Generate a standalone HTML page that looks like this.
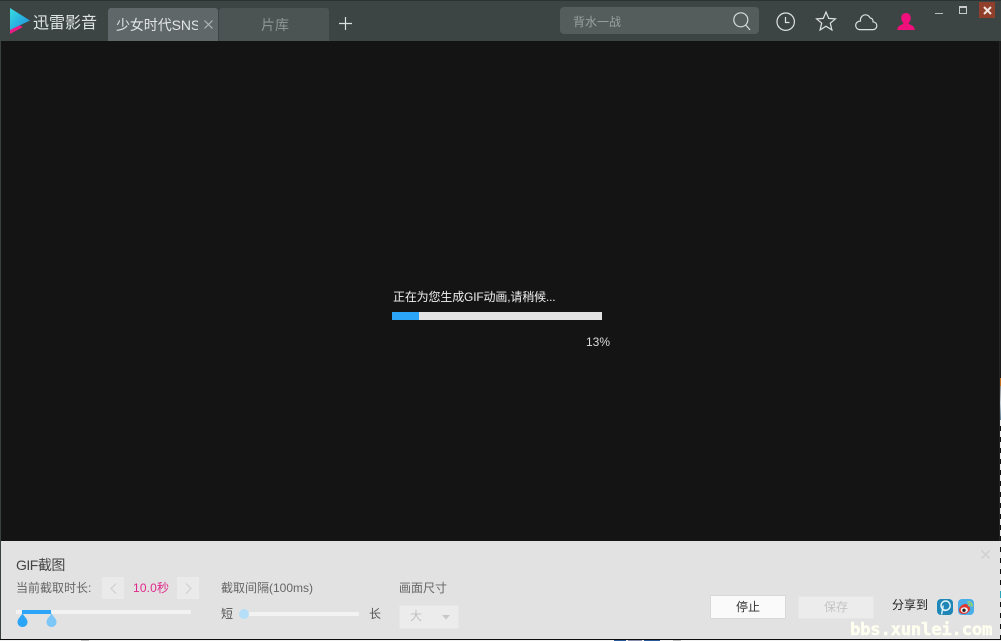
<!DOCTYPE html>
<html lang="zh">
<head>
<meta charset="utf-8">
<style>
html,body{margin:0;padding:0;width:1001px;height:641px;overflow:hidden;background:#000;}
body{position:relative;font-family:"Liberation Sans","Noto Sans CJK SC",sans-serif;}
.a{position:absolute;white-space:nowrap;}
svg{position:absolute;overflow:visible;}
</style>
</head>
<body>
<!-- title bar -->
<div class="a" style="left:0;top:0;width:1001px;height:41px;background:#3d4444;border-top:1px solid #2c3232;box-sizing:border-box;"></div>
<!-- video area -->
<div class="a" style="left:1px;top:41px;width:998px;height:500px;background:#141414;"></div>
<div class="a" style="left:0;top:41px;width:1px;height:600px;background:#3a3f3f;"></div>
<div class="a" style="left:999px;top:41px;width:1px;height:600px;background:#232525;"></div>
<div class="a" style="left:1000px;top:41px;width:1px;height:337px;background:#1c1c1c;"></div>
<div class="a" style="left:1000px;top:378px;width:1px;height:8px;background:#c4701f;"></div>
<div class="a" style="left:1000px;top:386px;width:1px;height:34px;background:linear-gradient(#8a8a8a,#c9d2d8,#5a7a90);"></div>
<div class="a" style="left:1000px;top:420px;width:1px;height:221px;background:repeating-linear-gradient(#e8e8e8 0,#e8e8e8 6px,#111 6px,#111 11px);"></div>
<div class="a" style="left:1000px;top:591px;width:1px;height:7px;background:#2aa6b8;"></div>

<!-- logo -->
<svg style="left:0;top:0" width="40" height="40">
<defs>
<linearGradient id="lg" x1="0" y1="0" x2="1" y2="1"><stop offset="0" stop-color="#38dde0"/><stop offset="1" stop-color="#1d8ce0"/></linearGradient>
</defs>
<polygon points="10,21 10,34 23,27" fill="#ec1c85"/>
<polygon points="10,8 30,20.5 10,30" fill="url(#lg)"/>
</svg>
<div class="a" style="left:33px;top:12.5px;font-size:16px;line-height:22px;color:#dfe3e3;">迅雷影音</div>

<!-- tabs -->
<div class="a" style="left:108px;top:8px;width:110px;height:33px;background:#606768;border-radius:3px 3px 0 0;"></div>
<div class="a" style="left:116px;top:15px;width:82px;overflow:hidden;font-size:14px;line-height:20px;color:#e2e5e5;letter-spacing:-0.1px;">少女时代SNSD</div>
<svg style="left:204px;top:20px" width="9" height="9"><path d="M0.5 0.5L8.5 8.5M8.5 0.5L0.5 8.5" stroke="#b5b9b9" stroke-width="1.1" fill="none"/></svg>
<div class="a" style="left:219px;top:8px;width:110px;height:33px;background:#4b5353;border-radius:3px 3px 0 0;"></div>
<div class="a" style="left:261px;top:15px;font-size:14px;line-height:20px;color:#8e9494;">片库</div>
<svg style="left:339px;top:17px" width="13" height="13"><path d="M6.5 0V13M0 6.5H13" stroke="#dde0e0" stroke-width="1.2" fill="none"/></svg>

<!-- search -->
<div class="a" style="left:560px;top:7px;width:199px;height:27px;background:#545c5c;border-radius:4px;"></div>
<div class="a" style="left:573px;top:13px;font-size:12px;line-height:18px;color:#9aa0a0;">背水一战</div>
<svg style="left:733px;top:11.5px" width="18" height="19" fill="none" stroke="#d8dbdb" stroke-width="1.2"><circle cx="7.8" cy="7.8" r="7"/><path d="M12.8 13L17 18"/></svg>

<!-- toolbar icons -->
<svg style="left:776px;top:11.5px" width="20" height="20" fill="none" stroke="#dfe2e2" stroke-width="1.2"><circle cx="9.7" cy="9.7" r="8.7"/><path d="M9.5 5V10.5H13.5"/></svg>
<svg style="left:815px;top:11px" width="22" height="20" fill="none" stroke="#dfe2e2" stroke-width="1.2"><path d="M11 1L13.7 7.4L20.4 7.9L15.3 12.2L16.9 18.9L11 15.2L5.1 18.9L6.7 12.2L1.6 7.9L8.3 7.4Z"/></svg>
<svg style="left:855px;top:14px" width="23" height="17" fill="none" stroke="#dfe2e2" stroke-width="1.2"><path d="M4.6 15.6H18C20.4 15.6 21.8 13.8 21.8 11.8C21.8 9.6 20.2 8 18 7.8C18.3 5.8 17.2 4.3 15.2 4C14.2 2 12.4 0.8 10.4 0.8C7.8 0.8 5.8 2.8 5.4 5.6C5.3 6.2 5.4 6.6 5.5 7C3 7 0.7 8.8 0.7 11.4C0.7 13.8 2.4 15.6 4.6 15.6Z"/></svg>
<svg style="left:897px;top:13px" width="18" height="17"><path d="M9 0C12 0 13.8 2.3 13.8 5C13.8 7 12.9 8.6 11.7 9.8C11.6 10.7 12 11.1 13.2 11.6C15.4 12.4 17.6 13.4 17.8 17H0.2C0.4 13.4 2.6 12.4 4.8 11.6C6 11.1 6.4 10.7 6.3 9.8C5.1 8.6 4.2 7 4.2 5C4.2 2.3 6 0 9 0Z" fill="#f0107c"/></svg>

<!-- window controls -->
<div class="a" style="left:935px;top:13px;width:8px;height:1px;background:#b9bdbd;"></div>
<div class="a" style="left:959px;top:6px;border:1px solid #c8cbcb;border-top-width:2px;width:6px;height:5px;"></div>
<div class="a" style="left:979px;top:2px;width:16px;height:16px;background:#8f3f2a;"></div>
<svg style="left:983px;top:6px" width="9" height="9"><path d="M1 1L8 8M8 1L1 8" stroke="#efe6e2" stroke-width="2" fill="none"/></svg>

<!-- progress -->
<div class="a" style="left:393px;top:288px;font-size:12px;line-height:18px;color:#f0f0f0;letter-spacing:-0.16px;">正在为您生成GIF动画,请稍候...</div>
<div class="a" style="left:392px;top:312px;width:210px;height:8px;background:#e2e2e2;"></div>
<div class="a" style="left:392px;top:312px;width:27px;height:8px;background:#2ba5f7;"></div>
<div class="a" style="left:586px;top:334px;font-size:12px;line-height:16px;color:#dcdcdc;">13%</div>

<!-- bottom panel -->
<div class="a" style="left:1px;top:541px;width:999px;height:98px;background:#e2e2e2;"></div>
<div class="a" style="left:0;top:639px;width:1001px;height:1px;background:#0c0c0c;"></div>
<div class="a" style="left:0;top:640px;width:1001px;height:1px;background:#f2f2f2;"></div>
<div class="a" style="left:81px;top:640px;width:8px;height:1px;background:#bdbdbd;"></div>
<div class="a" style="left:614px;top:640px;width:12px;height:1px;background:#2a5a9a;"></div>
<div class="a" style="left:628px;top:640px;width:14px;height:1px;background:#8a8fb0;"></div>
<div class="a" style="left:644px;top:640px;width:16px;height:1px;background:#2a5a9a;"></div>
<div class="a" style="left:673px;top:640px;width:8px;height:1px;background:#bdbdbd;"></div>
<svg style="left:981px;top:550px" width="9" height="9"><path d="M0.5 0.5L8.5 8.5M8.5 0.5L0.5 8.5" stroke="#cfcfcf" stroke-width="1.3" fill="none"/></svg>

<div class="a" style="left:16px;top:556px;font-size:14px;line-height:19px;color:#444;letter-spacing:-0.5px;">GIF截图</div>
<div class="a" style="left:16px;top:580px;font-size:12px;line-height:17px;color:#666;">当前截取时长:</div>
<div class="a" style="left:102px;top:577px;width:22px;height:22px;background:#eaeaea;"></div>
<svg style="left:110px;top:583px" width="7" height="11"><path d="M6 0.5L1 5.5L6 10.5" stroke="#cdcdcd" stroke-width="1" fill="none"/></svg>
<div class="a" style="left:133px;top:580px;font-size:12px;line-height:17px;color:#e2278a;letter-spacing:0.15px;">10.0秒</div>
<div class="a" style="left:177px;top:577px;width:22px;height:22px;background:#eaeaea;"></div>
<svg style="left:185px;top:583px" width="7" height="11"><path d="M1 0.5L6 5.5L1 10.5" stroke="#cdcdcd" stroke-width="1" fill="none"/></svg>

<div class="a" style="left:16px;top:610px;width:175px;height:4px;background:#f2f2f2;"></div>
<div class="a" style="left:22px;top:610px;width:29px;height:4px;background:#2ba5f7;"></div>
<svg style="left:17px;top:613px" width="11" height="14"><path d="M5.5 0C6 2.5 10.5 5.4 10.5 9C10.5 11.9 8.3 14 5.5 14C2.7 14 0.5 11.9 0.5 9C0.5 5.4 5 2.5 5.5 0Z" fill="#2ba5f7"/></svg>
<svg style="left:46px;top:613px" width="11" height="14"><path d="M5.5 0C6 2.5 10.5 5.4 10.5 9C10.5 11.9 8.3 14 5.5 14C2.7 14 0.5 11.9 0.5 9C0.5 5.4 5 2.5 5.5 0Z" fill="#7cc6f8"/></svg>

<div class="a" style="left:221px;top:580px;font-size:12px;line-height:17px;color:#666;">截取间隔(100ms)</div>
<div class="a" style="left:221px;top:606px;font-size:12px;line-height:17px;color:#555;">短</div>
<div class="a" style="left:240px;top:612px;width:119px;height:4px;background:#f2f2f2;"></div>
<div class="a" style="left:239px;top:609px;width:10px;height:10px;border-radius:50%;background:#b5dff9;"></div>
<div class="a" style="left:369px;top:606px;font-size:12px;line-height:17px;color:#555;">长</div>

<div class="a" style="left:399px;top:580px;font-size:12px;line-height:17px;color:#666;">画面尺寸</div>
<div class="a" style="left:399px;top:605px;width:60px;height:24px;background:#ececec;border:1px solid #e6e6e6;box-sizing:border-box;"></div>
<div class="a" style="left:410px;top:608px;font-size:12px;line-height:17px;color:#c0c0c0;">大</div>
<svg style="left:442px;top:615px" width="8" height="5"><polygon points="0,0 8,0 4,4.5" fill="#c8c8c8"/></svg>

<div class="a" style="left:710px;top:595px;width:76px;height:24px;background:#fafafa;border:1px solid #d8d8d8;box-sizing:border-box;text-align:center;font-size:12px;line-height:22px;color:#333;">停止</div>
<div class="a" style="left:798px;top:596px;width:76px;height:23px;background:#ececec;border:1px solid #e6e6e6;box-sizing:border-box;text-align:center;font-size:12px;line-height:21px;color:#c4c4c4;">保存</div>
<div class="a" style="left:892px;top:597px;font-size:12px;line-height:17px;color:#222;">分享到</div>

<!-- share icons -->
<div class="a" style="left:937px;top:599px;width:16px;height:16px;border-radius:4px;background:#1f87b8;"></div>
<svg style="left:937px;top:599px" width="16" height="16" fill="none" stroke="#e6f6fb" stroke-width="1.4"><path d="M4.6 15.5L6.2 6.5"/><circle cx="8.6" cy="6.6" r="4.6"/><path d="M6.5 11.5C9 12 12 11 13 8.5" stroke-width="1"/></svg>
<div class="a" style="left:958px;top:599px;width:16px;height:16px;border-radius:4px;background:#4aaee8;"></div>
<svg style="left:958px;top:599px" width="16" height="16"><path d="M1 11C1 8 4.5 5 7.5 5C9.5 5 10 6.3 10 7.5C12 7.5 12.5 9 12 10.5C11 13.5 8 15 5.5 15C3 15 1 13.5 1 11Z" fill="#e0352f"/><ellipse cx="6.3" cy="11" rx="3.6" ry="2.8" fill="#f4f4f4"/><circle cx="6" cy="11.3" r="1.7" fill="#222"/><path d="M9.5 2.8C12.5 2.5 14.5 4.8 14 7.5M9.8 5C11.3 4.9 12.2 6 12 7.3" stroke="#b6e23e" stroke-width="1.1" fill="none"/></svg>

<!-- watermark -->
<div class="a" style="left:850px;top:621px;font-family:'DejaVu Sans Mono',monospace;font-weight:bold;font-size:17.3px;line-height:18px;color:#fffff0;-webkit-text-stroke:0.4px #fffff0;letter-spacing:-0.25px;">bbs.xunlei.com</div>
</body>
</html>
